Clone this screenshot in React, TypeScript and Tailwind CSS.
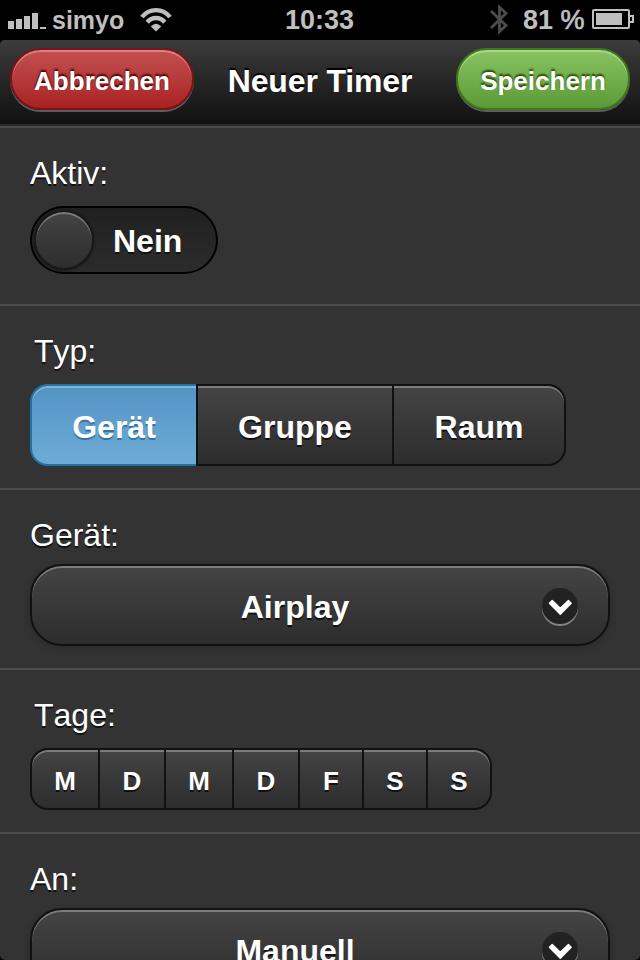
import type { ReactNode } from "react";
import clsx from "clsx";

const darkFace =
  "bg-linear-to-b from-[#444] to-[#2d2d2d] border-[#111] [text-shadow:0_2px_0_#111]";

function StatusBar() {
  return (
    <div className="flex h-10 shrink-0 items-start bg-black text-[27px] leading-[30px] font-bold text-[#bfbfbf]">
      <div className="flex w-[213px] items-start pl-2">
        <svg width="38" height="40" viewBox="0 0 38 40" fill="#bfbfbf">
          <rect x="0" y="21" width="6" height="8" />
          <rect x="8" y="19" width="6" height="10" />
          <rect x="16" y="16" width="6" height="13" />
          <rect x="24" y="13" width="6" height="16" />
          <rect x="32" y="27" width="6" height="2" />
        </svg>
        <span className="ml-1.5 w-[74px] pt-[5px] text-[25px]">simyo</span>
        <svg className="ml-3.5" width="32" height="40" viewBox="0 0 32 40" fill="none" stroke="#bfbfbf">
          <path d="M2 17 C9 7.8 23 7.8 30 17" strokeWidth="4.4" />
          <path d="M7.2 22.2 C12 16.6 20 16.6 24.8 22.2" strokeWidth="4.4" />
          <path d="M10.8 26.4 Q16 21.2 21.2 26.4 L16 31.4 Z" fill="#bfbfbf" stroke="none" />
        </svg>
      </div>
      <div className="w-[213px] pt-[5px] text-center">10:33</div>
      <div className="flex w-[214px] items-start pl-[63px]">
        <svg width="22" height="40" viewBox="0 0 22 40" fill="none" stroke="#4c4c4c" strokeWidth="2.8">
          <path d="M2 11 L17 25.5 L10.5 31.5 V7.2 L17 13.2 L2 28" />
        </svg>
        <span className="ml-3 w-16 pt-[5px] whitespace-nowrap">
          81 <span className="font-normal [-webkit-text-stroke:0.7px_#bfbfbf]">%</span>
        </span>
        <svg className="ml-1" width="44" height="40" viewBox="0 0 44 40">
          <rect x="2" y="10" width="36" height="18" rx="1" fill="none" stroke="#bfbfbf" strokeWidth="2" />
          <rect x="5" y="13" width="26" height="12" fill="#bfbfbf" />
          <path d="M39 16 H42 V22 H39" fill="none" stroke="#bfbfbf" strokeWidth="2" />
        </svg>
      </div>
    </div>
  );
}

function HeaderButton({ className, children }: { className: string; children: ReactNode }) {
  return (
    <button
      className={clsx(
        "mt-2 flex h-[62px] items-start justify-center rounded-full border-2 pt-4 text-[26px] leading-[30px] font-bold",
        className,
      )}
    >
      {children}
    </button>
  );
}

function Header() {
  return (
    <header className="flex h-[84px] shrink-0 items-start justify-between bg-linear-to-b from-[#3c3c3c] to-[#111] px-2.5 text-white">
      <HeaderButton className="w-[184px] border-[#7a1416] bg-linear-to-b from-[#c44f50] to-[#a92022] shadow-[inset_0_2px_0_rgba(255,255,255,0.3),0_2px_0_rgba(255,255,255,0.3)] [text-shadow:0_-2px_2px_#440000]">
        Abbrechen
      </HeaderButton>
      <h1 className="flex-1 pt-[23px] pr-[10px] text-center text-[32px] leading-9 font-bold tracking-[-0.15px] [text-shadow:0_-2px_1px_#000]">
        Neuer Timer
      </h1>
      <HeaderButton className="w-[174px] border-[#3d7a17] bg-linear-to-b from-[#89c461] to-[#5b9a38] shadow-[inset_0_2px_0_rgba(255,255,255,0.3),0_2px_0_rgba(255,255,255,0.3)] [text-shadow:0_-2px_2px_#234403]">
        Speichern
      </HeaderButton>
    </header>
  );
}

function Field({ label, indent, className, children }: { label: string; indent?: boolean; className: string; children: ReactNode }) {
  return (
    <section className={clsx("flex shrink-0 flex-col items-start border-t-2 border-[#4c4c4c] px-[30px] pt-[27px]", className)}>
      <div className={clsx("text-[32px] leading-9 [font-kerning:none] [text-shadow:0_2px_0_#111]", indent && "pl-1")}>
        {label}
      </div>
      {children}
    </section>
  );
}

function SelectButton({ value }: { value: string }) {
  return (
    <button
      className={clsx(
        "mt-[11px] flex h-[82px] w-full shrink-0 items-start rounded-[32px] border-2 shadow-[inset_0_2px_0_rgba(255,255,255,0.3),0_2px_8px_rgba(0,0,0,0.2)]",
        darkFace,
      )}
    >
      <span className="flex-1 pt-[23px] pl-[16px] text-center text-[32px] leading-9 font-bold">{value}</span>
      <span className="mt-[22px] mr-[30px] size-9 rounded-full bg-[#222] shadow-[0_2px_0_rgba(255,255,255,0.4)]">
        <svg width="36" height="36" viewBox="0 0 36 36" fill="#fff" stroke="#fff" strokeWidth="1.4" strokeLinejoin="round">
          <path d="M7.4 15.2 L10.2 12.4 L18.3 20.2 L26.4 12.4 L29.2 15.2 L18.3 26.2 Z" />
        </svg>
      </span>
    </button>
  );
}

const types = [
  { label: "Gerät", width: "w-[166px] border-l-2 rounded-l-[18px]", active: true },
  { label: "Gruppe", width: "w-[196px] border-l-2", active: false },
  { label: "Raum", width: "w-[174px] border-x-2 rounded-r-[18px]", active: false },
];

const days = [
  { label: "M", width: "w-[68px] rounded-l-[18px]" },
  { label: "D", width: "w-[66px]" },
  { label: "M", width: "w-[68px]" },
  { label: "D", width: "w-[66px]" },
  { label: "F", width: "w-[64px]" },
  { label: "S", width: "w-[64px]" },
  { label: "S", width: "w-[66px] border-r-2 rounded-r-[18px]" },
];

export default function App() {
  return (
    <div className="flex h-[960px] w-[640px] flex-col overflow-hidden bg-black font-['Liberation_Sans',Arial,sans-serif] text-white">
      <StatusBar />
      <main className="flex min-h-0 flex-1 flex-col overflow-hidden rounded-[5px] bg-[#333]">
        <Header />
        <div className="h-0.5 shrink-0 bg-[#2a2a2a]" />
        <Field label="Aktiv:" className="h-[178px]">
          <div className="mt-[15px] flex h-[68px] w-[188px] items-start rounded-full border-2 border-black bg-linear-to-b from-[#202020] to-[#2c2c2c] pt-0.5 pl-0.5">
            <div className="size-[60px] rounded-full border-2 border-[#181818] bg-linear-to-b from-[#444] to-[#2d2d2d] shadow-[inset_0_2px_0_rgba(255,255,255,0.3),0_1px_3px_rgba(0,0,0,0.4)]" />
            <div className="ml-[19px] pt-[13px] text-[32px] leading-9 font-bold [text-shadow:0_2px_0_#111]">Nein</div>
          </div>
        </Field>
        <Field label="Typ:" indent className="h-[184px]">
          <div className="mt-[15px] flex">
            {types.map((t) => (
              <button
                key={t.label}
                className={clsx(
                  "h-[82px] border-y-2 pt-1 text-[32px] leading-9 font-bold shadow-[inset_0_2px_0_rgba(255,255,255,0.3)]",
                  t.width,
                  t.active
                    ? "border-[#2373a5] bg-linear-to-b from-[#5393c5] to-[#6facd5] [text-shadow:0_2px_0_#3373a5]"
                    : darkFace,
                )}
              >
                {t.label}
              </button>
            ))}
          </div>
        </Field>
        <Field label="Gerät:" className="h-[180px]">
          <SelectButton value="Airplay" />
        </Field>
        <Field label="Tage:" indent className="h-[164px]">
          <div className="mt-[15px] flex">
            {days.map((d, i) => (
              <button
                key={i}
                className={clsx(
                  "h-[62px] border-y-2 border-l-2 pt-[3px] text-[26px] leading-[30px] font-bold shadow-[inset_0_2px_0_rgba(255,255,255,0.3)]",
                  d.width,
                  darkFace,
                )}
              >
                {d.label}
              </button>
            ))}
          </div>
        </Field>
        <Field label="An:" className="h-[180px]">
          <SelectButton value="Manuell" />
        </Field>
      </main>
    </div>
  );
}
